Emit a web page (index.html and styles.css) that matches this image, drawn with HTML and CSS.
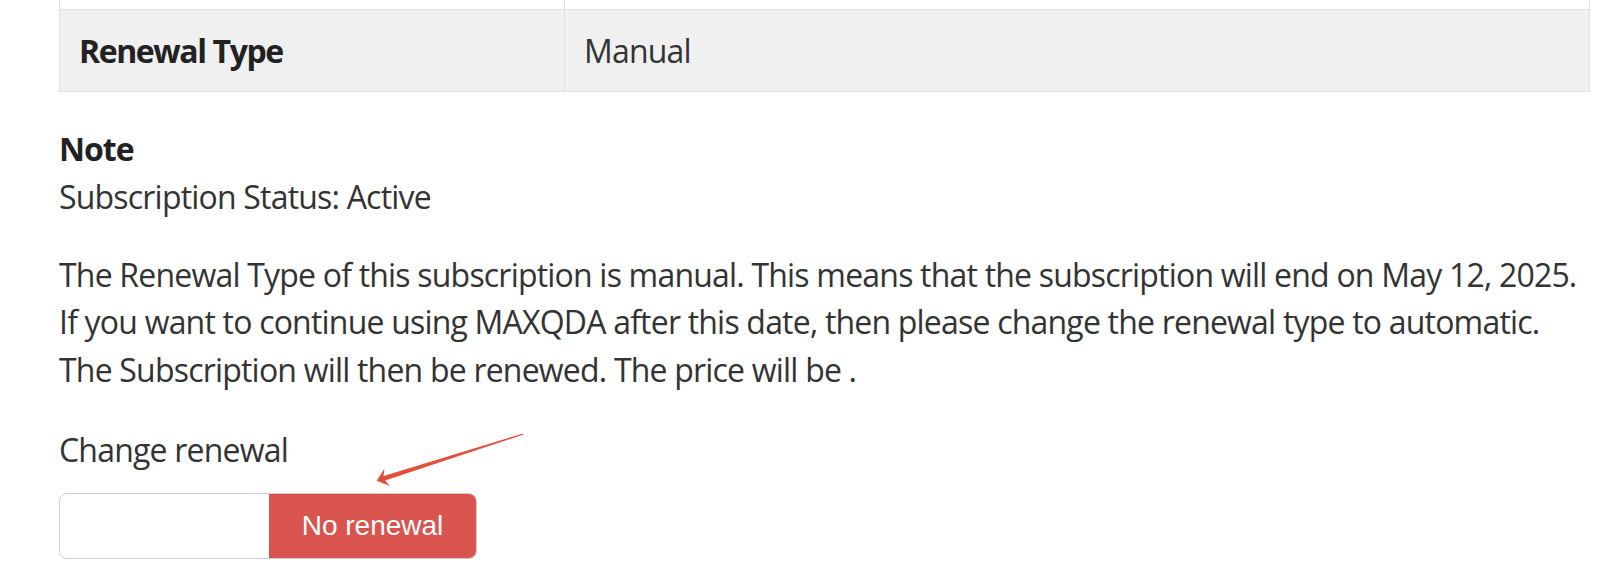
FILE: index.html
```html
<!DOCTYPE html>
<html lang="en">
<head>
    <meta charset="UTF-8">
    <title>Subscription</title>
    <link rel="stylesheet" href="styles.css">
</head>
<body>
    <div class="container">
        <table class="details">
            <tr class="cut">
                <th></th>
                <td></td>
            </tr>
            <tr class="shaded">
                <th>Renewal Type</th>
                <td>Manual</td>
            </tr>
        </table>

        <div class="note">
            <strong class="note-title">Note</strong>
            <span class="status">Subscription Status: Active</span>
        </div>

        <p class="note-text">The Renewal Type of this subscription is manual. This means that the subscription will end on May 12, 2025. If you want to continue using MAXQDA after this date, then please change the renewal type to automatic. The Subscription will then be renewed. The price will be .</p>

        <div class="renewal">
            <label class="renewal-label">Change renewal</label>
            <div class="switch">
                <span class="switch-handle"></span>
                <span class="switch-off">No renewal</span>
            </div>
            <svg class="arrow" width="175" height="70" viewBox="0 0 175 70">
                <polygon points="16.7,56.7 29.9,61.9 25.1,56.6 163.5,10.5 163.1,9.5 23.6,51.9 24.4,44.8" fill="#e0503c"/>
            </svg>
        </div>
    </div>
</body>
</html>
```

FILE: styles.css
```css
body {
    margin: 0;
    font-family: "Open Sans", "Noto Sans", sans-serif;
    font-size: 32px;
    line-height: 47.5px;
    letter-spacing: -0.8px;
    color: #333;
    background-color: #fff;
}
.container {
    padding-left: 59px;
    width: 1531px;
}
.details {
    width: 1531px;
    margin-top: -73px;
    border-collapse: collapse;
}
.details th,
.details td {
    border: 1px solid #dfe1e4;
    padding: 17px 19px;
    line-height: 47px;
    text-align: left;
    vertical-align: top;
}
.details .cut th,
.details .cut td {
    height: 47px;
}
.details th {
    width: 466px;
    font-weight: 700;
    letter-spacing: -1.4px;
    color: #222;
}
.details .shaded th,
.details .shaded td {
    background-color: #f0f0f0;
}
.note {
    margin-top: 32px;
}
.note-title {
    display: block;
    line-height: 49px;
    letter-spacing: -1px;
    color: #222;
}
.status {
    display: block;
}
.note-text {
    margin: 30px 0 0;
}
.renewal {
    position: relative;
    margin-top: 33px;
}
.renewal-label {
    display: block;
    margin-bottom: 19.5px;
}
.switch {
    display: inline-flex;
    height: 64px;
    border: 1px solid #ccc;
    border-radius: 8px;
    overflow: hidden;
}
.switch-handle {
    width: 209px;
    background-color: #fff;
}
.switch-off {
    width: 207px;
    background-color: #d9534f;
    color: #fff;
    font-family: "Liberation Sans", Arial, sans-serif;
    font-size: 28px;
    letter-spacing: 0;
    line-height: 64px;
    text-align: center;
}
.arrow {
    position: absolute;
    left: 301px;
    top: -2px;
}
```
